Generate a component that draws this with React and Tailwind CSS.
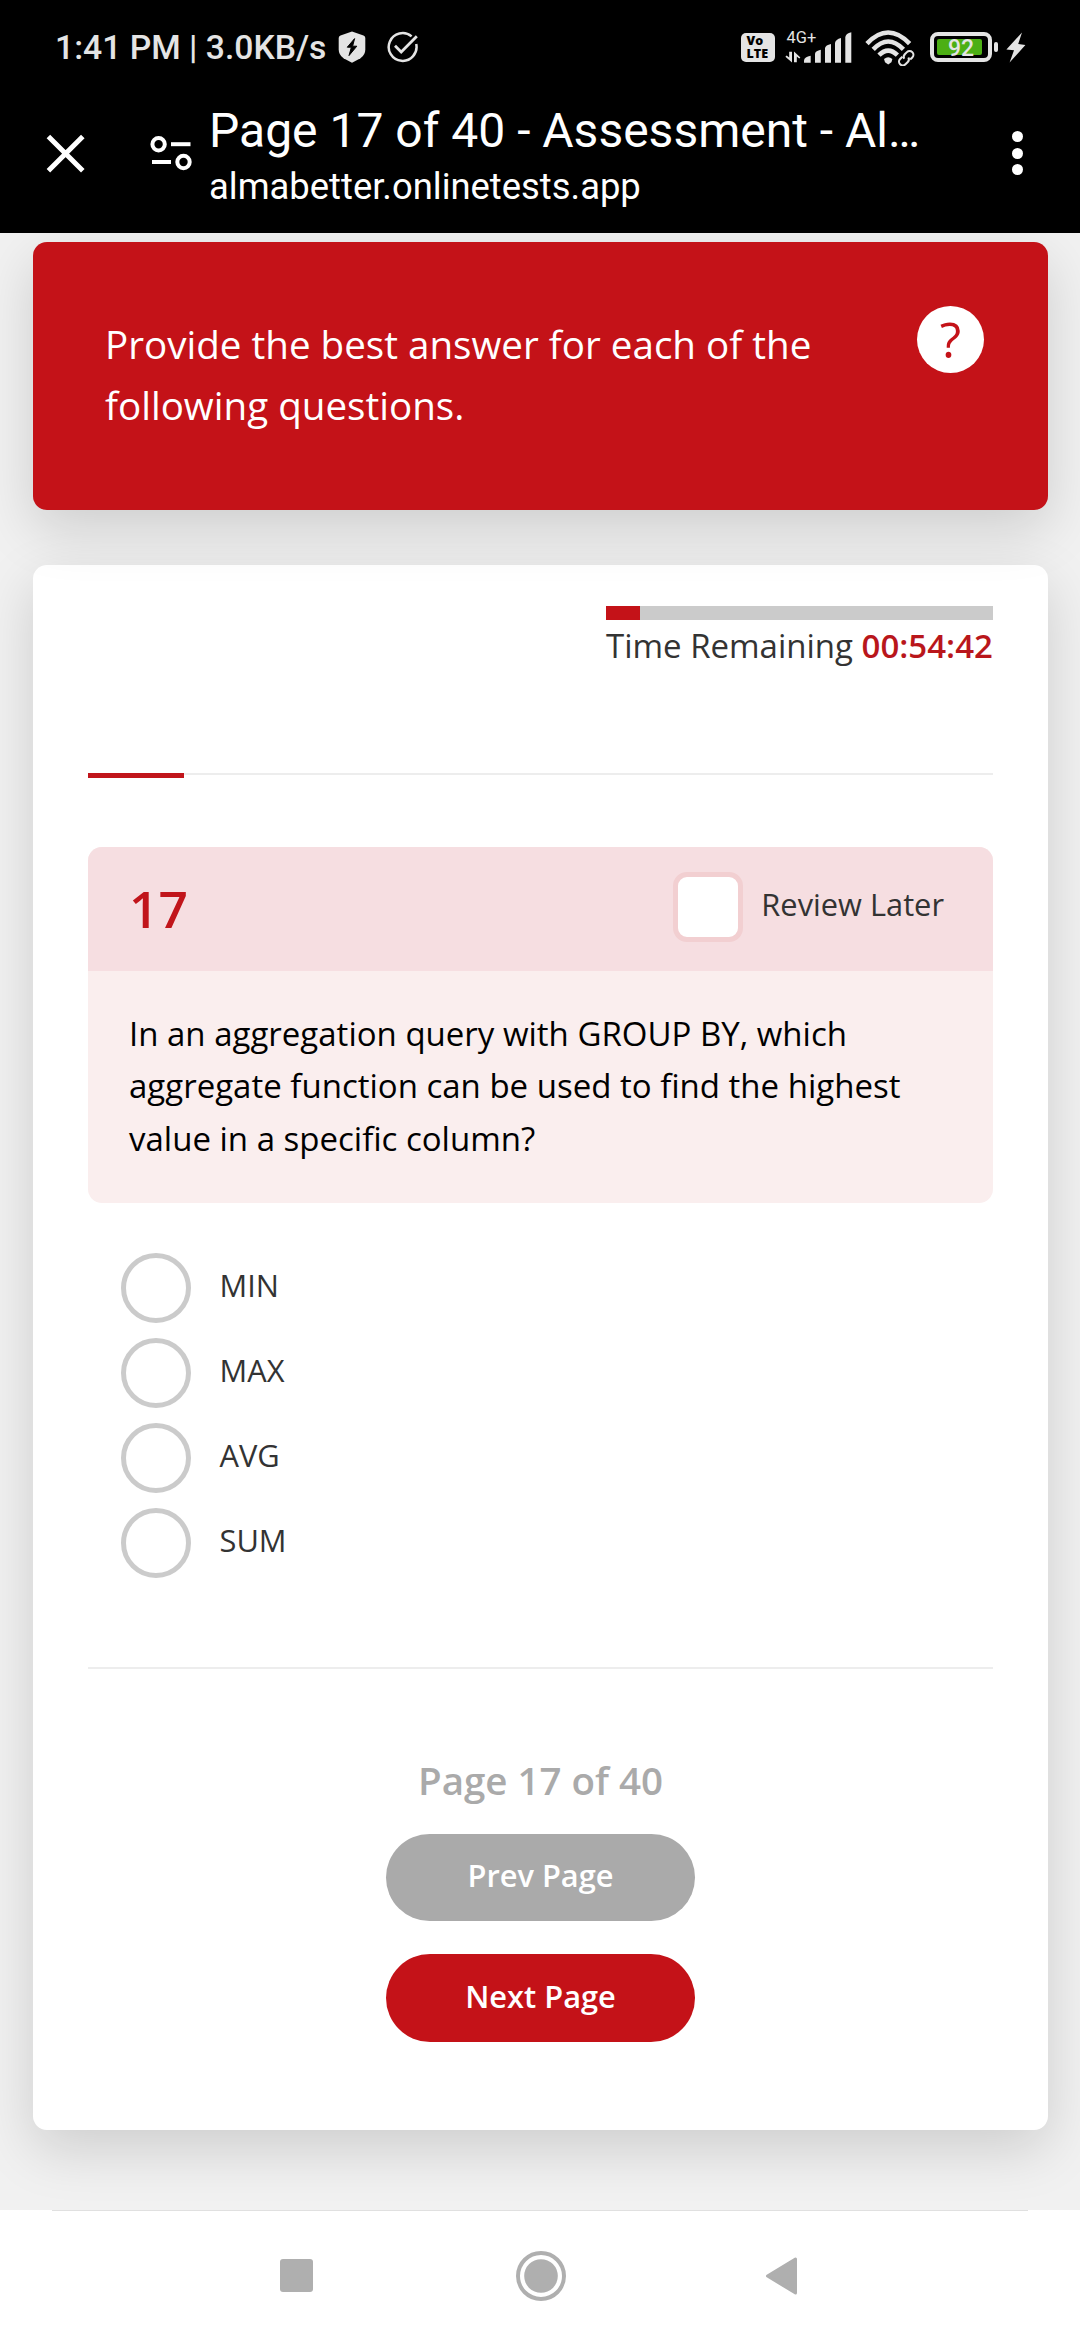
const OPTIONS = ["MIN", "MAX", "AVG", "SUM"];

function ShieldIcon() {
  return (
    <svg className="ml-[13px] mt-[31px] h-[32px] w-[28px] shrink-0" viewBox="0 0 28 32">
      <path d="M14 0.5 L25.5 4.6 Q27.3 5.3 27.3 7 V18.5 Q27.3 24 22.5 27.2 L14 31.8 L5.5 27.2 Q0.7 24 0.7 18.5 V7 Q0.7 5.3 2.5 4.6 Z" fill="#e4e4e4" />
      <path d="M16.6 7.6 L9.3 16.2 H13.4 L11 24.6 L18.8 15.2 H14.6 Z" fill="#000" stroke="#000" strokeWidth="1" strokeLinejoin="round" />
    </svg>
  );
}

function CheckCircleIcon() {
  return (
    <svg className="ml-[21px] mt-[31px] h-[32px] w-[32px] shrink-0" viewBox="0 0 32 32" fill="none" stroke="#e4e4e4" strokeWidth="2.5">
      <path d="M24.6 5.4 A13.9 13.9 0 1 0 29.2 13" />
      <path d="M8 14.8 L14.2 21 L29.8 5.2" strokeWidth="2.8" />
    </svg>
  );
}

function SignalIcon() {
  return (
    <svg className="h-[14px] w-[67px]" viewBox="0 0 67 14" overflow="visible" fill="#e4e4e4">
      <path d="M4.2 2.8 H7 V13.4 L0.4 7.8 L1.6 6.6 L4.2 8.6 Z" />
      <path d="M9 2.4 L15.4 8.4 L14.2 9.6 L11.8 7.6 V13.2 H9 Z" />
      <path d="M19 13.8 V11.5 Q19.4 8 25.7 6.8 V13.8 Z" />
      <path d="M30 13.8 V4.5 Q30.6 2 35.8 0.8 V13.8 Z" />
      <path d="M40 13.8 V-1 Q40.6 -4 46 -5 V13.8 Z" />
      <path d="M50 13.8 V-6 Q50.6 -9.6 56 -11 V13.8 Z" />
      <path d="M60.3 13.8 V-12 Q60.8 -15.6 66.3 -16.8 V13.8 Z" />
    </svg>
  );
}

function WifiIcon() {
  return (
    <svg className="ml-[13px] mt-[30px] h-[36px] w-[52px] shrink-0" viewBox="0 0 52 36" fill="none" stroke="#e4e4e4">
      <path d="M2 13.6 Q23 -8.6 44.6 13.6" strokeWidth="4.6" />
      <path d="M8.2 19.4 Q23.2 3.6 38.4 19.4" strokeWidth="4.6" />
      <path d="M14 25.2 Q23.2 16 32.4 25.2" strokeWidth="4.6" />
      <path d="M19 29 Q23.2 25.6 27.4 29 L26.4 32.2 L23.2 34.6 L20 32.2 Z" fill="#e4e4e4" stroke="none" />
      <g transform="rotate(-45 41.2 28.2)" strokeWidth="2.1">
        <path d="M39.6 24.4 H36.4 A3.8 3.8 0 0 0 36.4 32 H39.6 Q42.6 31.8 43.2 29.2" />
        <path d="M43 32 H46 A3.8 3.8 0 0 0 46 24.4 H43 Q40 24.6 39.4 27.2" />
      </g>
    </svg>
  );
}

function BoltIcon() {
  return (
    <svg className="ml-[8px] mt-[32px] h-[31px] w-[20px] shrink-0" viewBox="0 0 20 31">
      <path d="M16 0.5 L0.4 17.5 L8 18.2 L3.6 30.6 L19.4 13 L12.2 12 Z" fill="#e4e4e4" />
    </svg>
  );
}

function StatusBar() {
  return (
    <div className="flex h-[90px] items-start pl-[55px] text-[#e4e4e4]">
      <div className="mt-[28px] w-[270px] whitespace-nowrap text-[33.7px] leading-[40px] font-medium">1:41 PM | 3.0KB/s</div>
      <ShieldIcon />
      <CheckCircleIcon />
      <div className="mt-[33px] ml-auto flex h-[29px] w-[34px] shrink-0 flex-col justify-center rounded-[5px] bg-[#e4e4e4] pl-[5.5px] font-['Open_Sans',sans-serif] text-[12.5px] font-extrabold text-black">
        <span className="h-[12.5px] leading-[12.5px]">Vo</span>
        <span className="h-[12.5px] leading-[12.5px]">LTE</span>
      </div>
      <div className="mt-[29px] ml-[10px] flex h-[34px] w-[67px] flex-col justify-between">
        <span className="pl-[1.5px] text-[16.4px] leading-[17px]">4G+</span>
        <SignalIcon />
      </div>
      <WifiIcon />
      <div className="mt-[32px] ml-[13px] flex h-[30px] w-[62px] rounded-[8px] border-4 border-[#e4e4e4] p-[3px]">
        <div className="flex h-[16px] w-[45px] items-center justify-center rounded-[2px] bg-[#4caf14] pt-[3px] pl-[3px] text-[23px] leading-[16px] font-medium">92</div>
      </div>
      <div className="mt-[42px] ml-[2px] h-[10px] w-[4px] rounded-[2px] bg-[#e4e4e4]" />
      <BoltIcon />
      <div className="w-[54px] shrink-0" />
    </div>
  );
}

function BrowserBar() {
  return (
    <div className="flex h-[143px] items-start pl-[46px] text-white">
      <svg className="mt-[44px] h-[39px] w-[39px]" viewBox="0 0 39 39" stroke="#fff" strokeWidth="5">
        <path d="M2.4 2.4 L36.8 36.8 M36.8 2.4 L2.4 36.8" />
      </svg>
      <svg className="mt-[45px] ml-[65px] h-[36px] w-[42px]" viewBox="0 0 42 36" fill="none" stroke="#fff" strokeWidth="4">
        <circle cx="8.6" cy="9.2" r="6.2" />
        <path d="M21 9.2 H40.5" />
        <circle cx="33.5" cy="27" r="6.2" />
        <path d="M2 27 H21" />
      </svg>
      <div className="mt-[9px] ml-[17px] w-[759px] whitespace-nowrap">
        <div className="text-[48px] leading-[64px]">Page 17 of 40 - Assessment - Al…</div>
        <div className="mt-[2px] text-[36.4px] leading-[44px]">almabetter.onlinetests.app</div>
      </div>
      <div className="mt-[41px] ml-auto mr-[57px] flex flex-col gap-[5.5px]">
        <span className="h-[11px] w-[11px] rounded-full bg-white" />
        <span className="h-[11px] w-[11px] rounded-full bg-white" />
        <span className="h-[11px] w-[11px] rounded-full bg-white" />
      </div>
    </div>
  );
}

function Instructions() {
  return (
    <section className="relative z-10 flex h-[268px] justify-between rounded-[14px] bg-[#c41218] pt-[64px] pr-[64px] pl-[72px] shadow-[0_19px_55px_rgba(0,0,0,0.15)]">
      <p className="mt-[8px] w-[740px] text-[38.6px] leading-[61px] text-white">
        Provide the best answer for each of the following questions.
      </p>
      <button className="flex h-[67px] w-[67px] items-center justify-center rounded-full bg-white text-[49.5px] leading-[67px] font-medium text-[#c41218]">?</button>
    </section>
  );
}

function Timer() {
  return (
    <div className="ml-auto w-[387px]">
      <div className="h-[14px] bg-[#cbcbcb]">
        <div className="h-full w-[34px] bg-[#c41218]" />
      </div>
      <div className="mt-[-1px] whitespace-nowrap text-[33px] leading-[53px] text-[#333]">
        Time Remaining <span className="font-semibold text-[#b9161b]">00:54:42</span>
      </div>
    </div>
  );
}

function Question() {
  return (
    <div className="mt-[69px] overflow-hidden rounded-[14px] bg-[#faeeee]">
      <div className="flex h-[124px] items-start bg-[#f6dee1] pr-[49px] pl-[41px]">
        <div className="mt-[27px] text-[51.5px] leading-[68px] font-semibold text-[#c1151b]">17</div>
        <div className="mt-[25px] ml-auto h-[70px] w-[70px] rounded-[14px] border-[5px] border-[#f2cfd1] bg-white" />
        <div className="mt-[36px] ml-[18px] text-[30.8px] leading-[42px] text-[#333]">Review Later</div>
      </div>
      <p className="h-[232px] pt-[36.5px] pl-[41px] text-[33px] leading-[52.8px] text-black">
        In an aggregation query with GROUP BY, which
        <br />
        aggregate function can be used to find the highest
        <br />
        value in a specific column?
      </p>
    </div>
  );
}

function Options() {
  return (
    <div className="mt-[50px] flex flex-col gap-[15px] pl-[33px]">
      {OPTIONS.map((label) => (
        <label key={label} className="flex h-[70px] items-center">
          <span className="h-[70px] w-[70px] rounded-full border-[5px] border-[#cbcbcb]" />
          <span className="mb-[6px] ml-[28.5px] text-[30.8px] leading-[42px] text-[#333]">{label}</span>
        </label>
      ))}
    </div>
  );
}

function Pager() {
  return (
    <div className="flex flex-col items-center font-semibold">
      <div className="mt-[85px] text-[38.5px] leading-[52px] text-[#aaa]">Page 17 of 40</div>
      <button className="mt-[28px] h-[87px] w-[309px] rounded-full bg-[#aaa] pb-[6px] text-[30.8px] leading-[42px] text-white">Prev Page</button>
      <button className="mt-[33px] h-[88px] w-[309px] rounded-full bg-[#c41218] pb-[5px] text-[30.8px] leading-[42px] text-white">Next Page</button>
    </div>
  );
}

function NavigationBar() {
  return (
    <nav className="relative z-20 h-[130px] bg-white">
      <div className="mr-[52px] ml-[52px] h-px bg-[#e0e0e0]" />
      <div className="flex h-[129px] items-center pl-[279.5px]">
        <div className="h-[33px] w-[33px] rounded-[3px] bg-[#afafaf]" />
        <svg className="ml-[203px] h-[50px] w-[50px]" viewBox="0 0 50 50">
          <circle cx="25" cy="25" r="23" fill="none" stroke="#afafaf" strokeWidth="4" />
          <circle cx="25" cy="25" r="16.8" fill="#afafaf" />
        </svg>
        <svg className="ml-[199px] h-[38px] w-[33px]" viewBox="0 0 33 38">
          <path d="M2.5 19 L30.5 2 V36 Z" fill="#afafaf" stroke="#afafaf" strokeWidth="3" strokeLinejoin="round" />
        </svg>
      </div>
    </nav>
  );
}

export default function App() {
  return (
    <div className="h-[2340px] w-[1080px] overflow-hidden bg-[#f1f1f1] font-['Open_Sans',sans-serif]">
      <header className="relative z-20 h-[233px] bg-black font-['Roboto',sans-serif]">
        <StatusBar />
        <BrowserBar />
      </header>
      <main className="h-[1977px] pt-[9px] pr-[32px] pl-[33px]">
        <Instructions />
        <section className="mt-[55px] h-[1565px] rounded-[14px] bg-white px-[55px] pt-[41px] shadow-[0_19px_55px_rgba(0,0,0,0.15)]">
          <Timer />
          <div className="mt-[101px] h-[5px]">
            <div className="flex h-[2px] items-start bg-[#ededed]">
              <div className="h-[5px] w-[96px] bg-[#c1151b]" />
            </div>
          </div>
          <Question />
          <Options />
          <div className="mt-[89px] h-[2px] bg-[#ededed]" />
          <Pager />
        </section>
      </main>
      <NavigationBar />
    </div>
  );
}
